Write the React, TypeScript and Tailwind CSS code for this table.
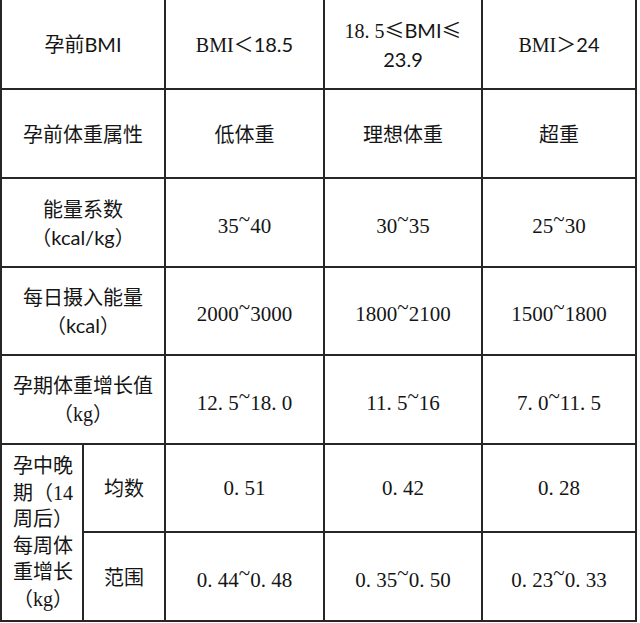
const sans = "font-['Lato','Noto_Sans_CJK_SC',sans-serif]";
const serif = "font-['Liberation_Serif','Noto_Sans_CJK_SC',serif]";

function Cell({ children, className = "" }: { children: React.ReactNode; className?: string }) {
  return (
    <div className={`flex flex-col items-center justify-center bg-white text-center text-[20px] leading-[28px] text-[#151515] ${className}`}>
      {children}
    </div>
  );
}

// raised tilde as in SimSun
function Range({ from, to }: { from: string; to: string }) {
  return (
    <span className={`${serif} text-[21px]`}>
      {from}
      <span className="align-[0.35em]">~</span>
      {to}
    </span>
  );
}

function Num({ children }: { children: React.ReactNode }) {
  return <span className={`${serif} text-[21px]`}>{children}</span>;
}

export default function App() {
  return (
    <div className="h-[623px] w-[640px] bg-white">
      <div className="grid w-[637px] grid-cols-[80px_80px_157px_156px_152px] grid-rows-[88px_87px_87px_86px_87px_86px_87px] gap-[2px] bg-[#262626] px-[2px] pb-[2px]">
        {/* row 1 */}
        <Cell className={`col-span-2 ${sans}`}>孕前BMI</Cell>
        <Cell>
          <span>
            <span className={serif}>BMI＜</span>
            <span className={sans}>18.5</span>
          </span>
        </Cell>
        <Cell>
          <span>
            <span className={serif}>18. 5</span>
            <span className="font-['Noto_Sans_CJK_SC',sans-serif]">≤</span>
            <span className={sans}>BMI</span>
            <span className="font-['Noto_Sans_CJK_SC',sans-serif]">≤</span>
          </span>
          <span className={sans}>23.9</span>
        </Cell>
        <Cell>
          <span>
            <span className={serif}>BMI＞</span>
            <span className={sans}>24</span>
          </span>
        </Cell>

        {/* row 2 */}
        <Cell className={`col-span-2 ${sans}`}>孕前体重属性</Cell>
        <Cell className={sans}>低体重</Cell>
        <Cell className={sans}>理想体重</Cell>
        <Cell className={sans}>超重</Cell>

        {/* row 3 */}
        <Cell className={`col-span-2 ${sans}`}>
          <span>能量系数</span>
          <span>（kcal/kg）</span>
        </Cell>
        <Cell><Range from="35" to="40" /></Cell>
        <Cell><Range from="30" to="35" /></Cell>
        <Cell><Range from="25" to="30" /></Cell>

        {/* row 4 */}
        <Cell className={`col-span-2 ${sans}`}>
          <span>每日摄入能量</span>
          <span>（kcal）</span>
        </Cell>
        <Cell><Range from="2000" to="3000" /></Cell>
        <Cell><Range from="1800" to="2100" /></Cell>
        <Cell><Range from="1500" to="1800" /></Cell>

        {/* row 5 */}
        <Cell className={`col-span-2 ${serif}`}>
          <span>孕期体重增长值</span>
          <span>（kg）</span>
        </Cell>
        <Cell><Range from="12. 5" to="18. 0" /></Cell>
        <Cell><Range from="11. 5" to="16" /></Cell>
        <Cell><Range from="7. 0" to="11. 5" /></Cell>

        {/* rows 6-7 */}
        <div className={`row-span-2 flex flex-col justify-center bg-white pl-[11px] text-[20px] leading-[26.5px] text-[#151515] ${serif}`}>
          <span>孕中晚</span>
          <span>期（14</span>
          <span>周后）</span>
          <span>每周体</span>
          <span>重增长</span>
          <span>（kg）</span>
        </div>
        <Cell className={sans}>均数</Cell>
        <Cell><Num>0. 51</Num></Cell>
        <Cell><Num>0. 42</Num></Cell>
        <Cell><Num>0. 28</Num></Cell>

        <Cell className={sans}>范围</Cell>
        <Cell><Range from="0. 44" to="0. 48" /></Cell>
        <Cell><Range from="0. 35" to="0. 50" /></Cell>
        <Cell><Range from="0. 23" to="0. 33" /></Cell>
      </div>
    </div>
  );
}
